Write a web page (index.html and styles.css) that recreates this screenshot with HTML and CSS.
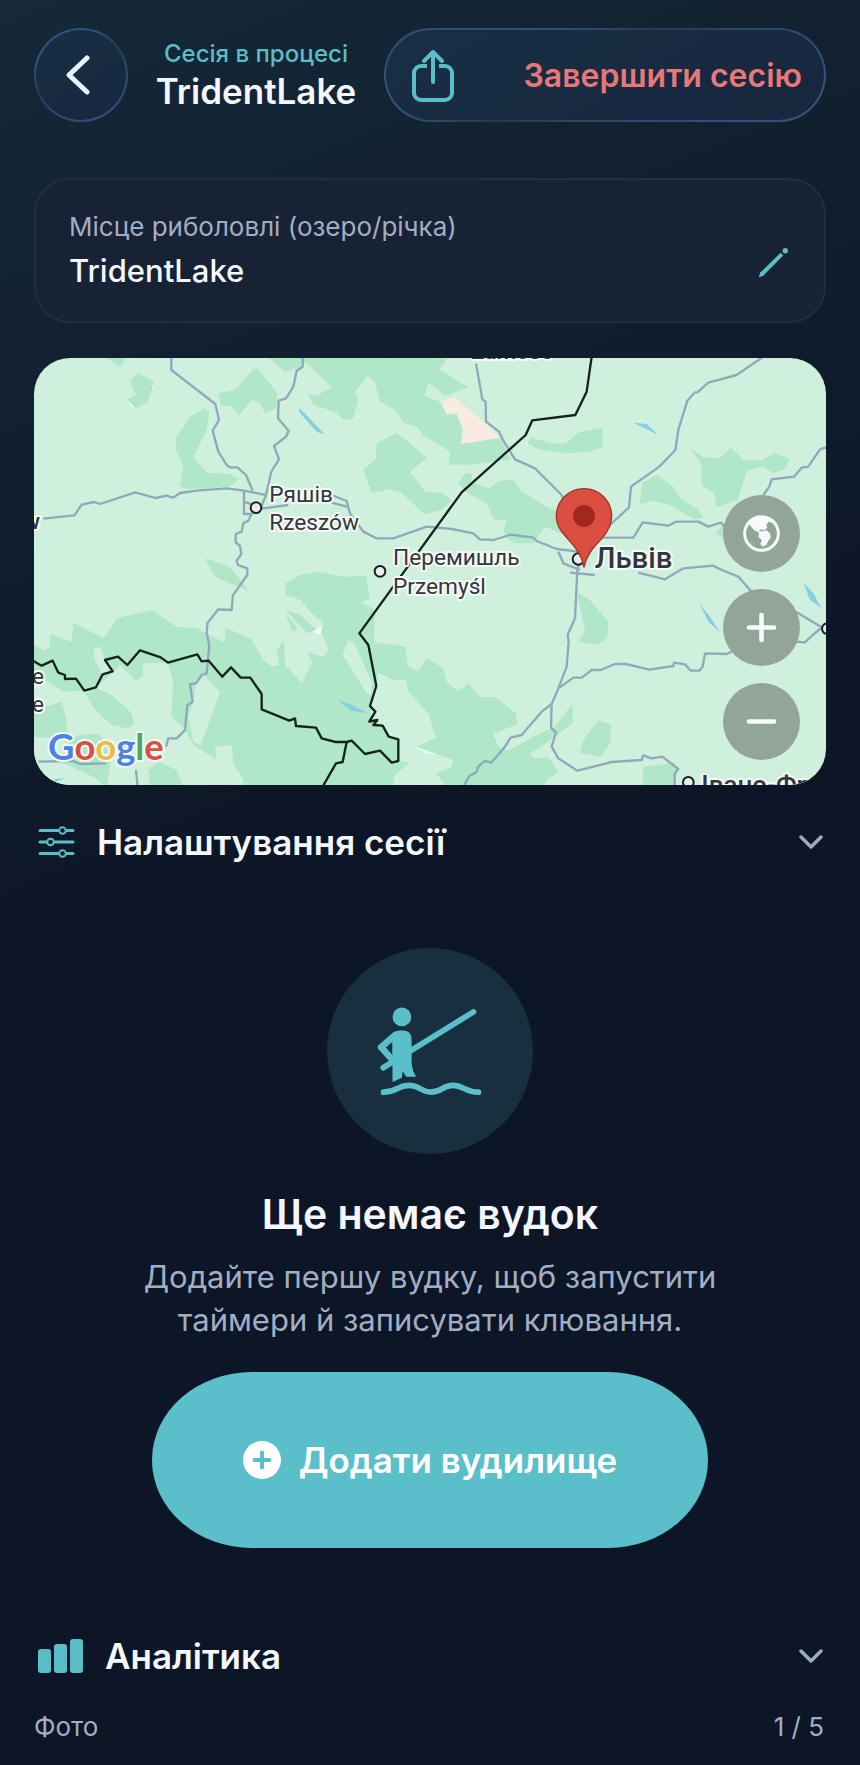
FILE: index.html
```html
<!DOCTYPE html>
<html lang="uk">
<head>
<meta charset="utf-8">
<meta name="viewport" content="width=device-width, initial-scale=1">
<title>TridentLake</title>
<link rel="stylesheet" href="styles.css">
</head>
<body>
<main class="screen">
  <header class="topbar">
    <button class="glass back" aria-label="Назад">
      <svg class="back-icon" viewBox="0 0 24 40" fill="none" stroke="currentColor" stroke-width="5" stroke-linecap="round" stroke-linejoin="round"><path d="M21 3 3 20l18 17"/></svg>
    </button>
    <div class="heading">
      <p class="status">Сесія в процесі</p>
      <h1 class="title">TridentLake</h1>
    </div>
    <div class="glass actions">
      <button class="share" aria-label="Поділитися">
        <svg class="share-icon" viewBox="0 0 42 54" fill="none" stroke="currentColor" stroke-width="4" stroke-linecap="round" stroke-linejoin="round"><path d="M21 34V4M12 13l9-9 9 9"/><path d="M15 18H9a7 7 0 0 0-7 7v20a7 7 0 0 0 7 7h24a7 7 0 0 0 7-7V25a7 7 0 0 0-7-7h-6" stroke-linecap="butt"/></svg>
      </button>
      <button class="finish">Завершити сесію</button>
    </div>
  </header>

  <section class="place">
    <div class="place-field">
      <label class="place-label" for="place">Місце риболовлі (озеро/річка)</label>
      <input class="place-input" id="place" type="text" value="TridentLake">
    </div>
    <button class="edit" aria-label="Редагувати">
      <svg class="edit-icon" viewBox="0 0 86 86" fill="currentColor"><path d="M1 85 5 72 64 14 72 22 14 81Z"/><path d="M1 85 5 72 14 81Z" stroke="currentColor" stroke-width="2" stroke-linejoin="round"/><circle cx="78" cy="8" r="8"/></svg>
    </button>
  </section>

  <section class="map" aria-label="Мапа">
    <svg class="map-art" viewBox="12 24 2376 1281" preserveAspectRatio="xMidYMid slice">
      <rect class="land" x="0" y="0" width="2430" height="1320"/>
      <g class="forest">
        <path d="M225 20 272 52 290 20ZM325 68 372 95 352 160 315 175 290 148 318 135 300 92ZM670 57 685 57 742 130 738 175 705 190 690 160 665 150 628 196 605 170 572 165 566 130 615 120ZM712 20 765 66 812 50 812 20Z"/>
        <path d="M480 200 525 175 538 190 530 240 490 322 530 368 600 372 628 388 600 410 470 418 450 408 460 345 438 300 438 262ZM525 625 600 650 640 700 658 725 600 700 555 680Z"/>
        <path d="M810 20 1255 20 1228 58 1315 112 1245 137 1195 97 1183 137 1230 155 1250 195 1280 188 1297 235 1292 283 1410 264 1442 328 1325 344 1255 344 1262 305 1180 255 1160 230 1120 218 1095 180 1050 155 1035 95 1013 78 975 125 985 150 968 208 940 208 915 185 850 165 832 130 860 137 905 112 830 40 810 40Z"/>
        <path d="M1100 248 1140 280 1190 325 1140 365 1185 425 1240 430 1265 450 1235 480 1185 493 1110 425 1080 418 1025 430 1000 360 1038 325 1040 280Z"/>
        <path d="M1285 400 1307 368 1328 372 1322 395 1375 415 1410 392 1450 390 1475 425 1550 470 1620 500 1620 560 1545 530 1510 580 1450 580 1420 545 1430 510 1390 508 1370 460 1320 435Z"/>
        <path d="M1492 280 1505 262 1560 280 1605 280 1650 245 1718 235 1718 292 1675 305 1610 310 1530 300Z"/>
        <path d="M1980 293 2020 322 2067 325 2102 293 2142 330 2195 330 2235 310 2280 328 2265 358 2230 370 2200 350 2150 362 2123 450 2060 472 2052 430 2015 405 2015 345ZM1835 400 1882 375 1930 410 1950 445 2005 480 2018 503 1990 507 1920 465 1870 452 1830 462ZM2055 550 2080 525 2090 570Z"/>
        <path d="M1640 725 1685 755 1735 815 1732 865 1700 885 1645 875 1665 840ZM1705 1110 1743 1123 1742 1175 1712 1222 1650 1208 1660 1170ZM1840 1250 1905 1243 1932 1235 1942 1260 1930 1310 1838 1310Z"/>
        <path d="M12 882 40 902 60 890 60 852 125 875 130 818 222 865 260 805 365 780 440 830 500 835 585 878 585 832 665 868 700 930 725 950 748 945 740 900 762 870 765 945 810 990 848 935 808 900 768 795 765 700 810 675 865 665 940 680 1008 678 1020 745 995 757 1035 780 1032 875 1125 890 1135 950 1165 963 1190 923 1240 955 1250 995 1285 1023 1315 1000 1350 1042 1395 1040 1458 1090 1462 1122 1390 1152 1405 1190 1435 1202 1510 1160 1575 1130 1628 1060 1628 1120 1550 1180 1500 1210 1510 1225 1555 1222 1585 1265 1550 1290 1540 1310 12 1310Z"/>
      </g>
      <g class="land">
        <path d="M12 970 100 1025 165 1022 200 1012 250 965 270 945 318 992 338 980 340 940 414 938 430 1000 425 1090 460 1130 490 1185 560 1230 555 1190 605 1185 610 1240 640 1290 640 1310 12 1310Z"/>
        <path d="M190 895 210 890 225 930 248 964 215 973 195 930ZM500 985 520 975 570 1025 512 1185 490 1175 475 1100 490 1055Z"/>
        <path d="M765 735 812 750 840 785 880 820 875 855 898 900 880 922 830 905 848 935 815 1000 790 970 768 930 765 850 805 840 768 790Z"/>
        <path d="M1045 968 1090 990 1128 990 1135 1025 1195 1090 1218 1163 1160 1190 1270 1230 1265 1252 1218 1270 1250 1310 1088 1310 1095 1275 1140 1238 1105 1233 1105 1168 1076 1160 1058 1127 1025 1100 1020 1060 1040 1010ZM955 872 970 875 1025 995 1022 1035 1010 1030 938 915Z"/>
      </g>
      <g class="forest">
        <path d="M12 1080 95 1055 110 1110 115 1160 60 1165 12 1160ZM165 1030 200 1015 245 1035 305 1090 312 1125 290 1135 245 1125 195 1080ZM430 995 480 1045 460 1135 425 1100ZM355 1260 385 1235 440 1260 460 1310 360 1310ZM120 1160 200 1150 250 1190 230 1310 190 1280 100 1240Z"/>
        <path d="M765 700 812 680 812 735ZM768 780 812 795 860 840 830 850Z"/>
      </g>
      <path class="sand" d="M1235 155 1272 138 1330 190 1365 220 1410 264 1292 281 1300 240 1280 190 1248 192Z"/>
      <path class="snow" d="m875 828-5 27-22-10ZM1160 1190l60 25-35-7ZM290 148l25 26-10-2Z"/>
      <path class="water" d="M808 173 885 254 860 245 808 187ZM1810 218 1850 222 1885 254ZM2008 760 2040 800 2070 847 2035 815ZM2320 698 2350 730 2375 775 2340 750ZM922 1050 965 1065 1012 1090 965 1082ZM75 1287 105 1285 70 1297Z"/>
      <g class="roads">
        <path d="M424 20V60L556 162 567 210 548 242 565 305 590 345 600 352 622 352 648 375 668 422M818 20V50L800 62 790 110 768 145 746 152 744 205 776 242 768 260 732 288 747 328 724 365 708 435M40 506 133 496 155 464 192 456 210 462 316 427 376 444 410 437 430 443 450 429 500 422 590 415 642 422 708 435M642 422V492L665 492 655 512 640 520 635 545 617 552 617 577 630 588 634 612 620 632 624 645 652 655 652 675 608 737 608 745 605 780 565 778 532 820 530 850 538 885 530 970 515 975 498 1000 480 1003 488 1055 472 1065 465 1140 440 1165 415 1165 408 1190M642 455 700 475 775 465M708 435 690 480"/>
        <path d="M25 1235 130 1233 150 1242 230 1240M318 1260 323 1310"/>
        <path d="M1338 40 1357 148 1367 155 1368 215 1407 245 1420 272 1455 328 1515 355 1595 435 1650 560M905 435 950 453 960 490 1000 545 1040 565 1090 565 1190 530 1265 537 1330 550 1350 568 1390 570 1442 554 1510 563 1520 573 1580 597 1645 605M905 458 950 470M1585 605 1600 640 1650 660"/>
        <path d="M2200 20 2120 75 2035 98 2002 127 1995 127 1972 152 1945 240 1936 300 1888 350 1803 410 1797 472 1740 525 1660 600M1700 563H1810L1838 517 1915 527 1938 515 2005 515 2035 530 2072 518 2085 530M2390 292 2370 298 2335 350 2315 353 2292 380 2225 388 2218 410 2200 435"/>
        <path d="M1620 668 1695 675M1825 668 1905 688 1960 655 2050 647 2075 660 2125 680 2165 725 2305 790 2375 832 2345 858 2325 877 2300 875M1650 630 1642 660 1635 805 1617 845 1613 855 1616 875 1610 950 1585 1015 1565 1062 1563 1133 1578 1147 1565 1190 1585 1225 1642 1262 1745 1236 1835 1230 1840 1216 1865 1225 1897 1220 1945 1257 1934 1272V1310M1565 1062 1535 1085 1475 1155 1442 1163 1425 1190 1385 1237 1363 1233 1345 1250 1340 1265 1318 1278 1300 1310M1585 1015 1630 983 1655 983 1685 960 1712 960 1755 942 1788 942 1858 959 1930 948 1932 938 1965 943 1982 962 2008 962 2018 950 2025 910 2090 912 2105 905"/>
      </g>
      <g class="borders">
        <path d="M1685 20 1670 125 1636 195 1507 211 1487 255 1295 427 988 850 1015 885 1039 1008 1020 1068 1036 1085 1018 1115 1042 1110 1030 1125 1058 1127 1076 1160 1105 1168V1233L1085 1238 1050 1202 1005 1212 965 1172 950 1176 917 1176 875 1165 858 1133 798 1128 795 1105 778 1112 695 1078V1032L661 983H632L603 952 577 980 536 932 515 934 502 913 414 938 392 922 330 901 292 945 264 920 225 930 248 964 218 973 198 1012 163 1022 138 986 105 987V975L85 968 68 932 35 947 8 932"/>
        <path d="M950 1176 938 1236 918 1240 878 1310"/>
      </g>
      <g class="towns"><circle cx="678" cy="473" r="16"/><circle cx="1050" cy="664" r="16"/><circle cx="1645" cy="627" r="17"/><circle cx="1975" cy="1297" r="16"/><circle cx="2392" cy="836" r="16"/></g>
      <g class="labels">
        <text x="718" y="457">Ряшів</text><text x="718" y="540">Rzeszów</text>
        <text x="1089" y="646">Перемишль</text><text x="1089" y="732">Przemyśl</text>
        <text x="42" y="1001" text-anchor="end">е</text><text x="42" y="1087" text-anchor="end">e</text>
        <text class="city" x="1322" y="28">Zamość</text><text class="city" x="30" y="538" text-anchor="end">w</text>
        <text class="major" x="1694" y="655">Львів</text><text class="region" x="2014" y="1332">Івано-Франківськ</text>
      </g>
      <g class="pin"><path d="M1662 652C1656 618 1640 596 1612 565Q1579 532 1579 499A83 83 0 0 1 1745 499Q1745 532 1716 565C1686 596 1669 618 1662 652Z"/><circle cx="1662" cy="498" r="33"/></g>
      <text class="google" x="54" y="1231"><tspan class="g-blue">G</tspan><tspan class="g-red">o</tspan><tspan class="g-yellow">o</tspan><tspan class="g-blue">g</tspan><tspan class="g-green">l</tspan><tspan class="g-red">e</tspan></text>
    </svg>
    <div class="map-controls">
      <button class="map-button" aria-label="Тип мапи">
        <svg class="map-icon" viewBox="0 0 112 112"><circle cx="56" cy="56" r="51" fill="none" stroke="currentColor" stroke-width="9"/><path fill="currentColor" d="M12 26 34 8 72 5 95 22 88 24 78 20 70 30 74 38 64 47 54 43 47 47 58 50 72 46 82 57 84 69 77 77 71 91 59 95 52 88 57 76 47 67 48 54 32 45 22 32Z"/></svg>
      </button>
      <button class="map-button" aria-label="Збільшити"><svg class="map-icon" viewBox="0 0 112 112" stroke="currentColor" stroke-width="14" stroke-linecap="round"><path d="M18 56H94M56 18V94"/></svg></button>
      <button class="map-button" aria-label="Зменшити"><svg class="map-icon" viewBox="0 0 112 112" stroke="currentColor" stroke-width="14" stroke-linecap="round"><path d="M18 56H94"/></svg></button>
    </div>
  </section>

  <button class="section-row" aria-expanded="false">
    <svg class="sliders-icon" viewBox="0 0 37 32" fill="none" stroke="currentColor" stroke-width="3" stroke-linecap="round"><path d="M2 4.500H20M29 4.500H35M2 16H8M17 16H35M2 27.500H20M29 27.500H35"/><circle cx="24.500" cy="4.500" r="3.300" stroke-width="2"/><circle cx="12.500" cy="16" r="3.300" stroke-width="2"/><circle cx="24.500" cy="27.500" r="3.300" stroke-width="2"/></svg>
    <span class="section-title">Налаштування сесії</span>
    <svg class="chevron" viewBox="0 0 24 14" fill="none" stroke="currentColor" stroke-width="3.500" stroke-linecap="round" stroke-linejoin="round"><path d="m2 2 10 10L22 2"/></svg>
  </button>

  <section class="empty">
    <div class="empty-badge">
      <svg class="angler" viewBox="22 26 616 616" fill="none" stroke="currentColor" stroke-width="17" stroke-linecap="round" stroke-linejoin="round">
        <path d="M190 384 460 217M191 457C233 457 232 437 267 437S301 457 333 457 367 437 399 437 434 457 475 457"/>
        <path d="M226 286 184 323 219 362" stroke-width="20"/>
        <path d="M217 300Q217 273 240 273H248Q275 273 275 300V372Q278 395 288 411L259 411 248 394 246 414 218 427Z" fill="currentColor" stroke="none"/>
        <circle cx="246" cy="232" r="28" fill="currentColor" stroke="none"/>
      </svg>
    </div>
    <h2 class="empty-title">Ще немає вудок</h2>
    <p class="empty-text">Додайте першу вудку, щоб запустити таймери й записувати клювання.</p>
    <button class="add">
      <svg class="add-icon" viewBox="0 0 38 38"><circle cx="19" cy="19" r="19" fill="currentColor"/><path class="add-plus" d="M19 11.500V26.500M11.500 19H26.500"/></svg>
      <span>Додати вудилище</span>
    </button>
  </section>

  <button class="section-row" aria-expanded="false">
    <svg class="bars-icon" viewBox="0 0 45 34" fill="currentColor"><rect x="0" y="10" width="13" height="24" rx="3"/><rect x="16" y="5" width="13" height="29" rx="3"/><rect x="32" y="0" width="13" height="34" rx="3"/></svg>
    <span class="section-title">Аналітика</span>
    <svg class="chevron" viewBox="0 0 24 14" fill="none" stroke="currentColor" stroke-width="3.500" stroke-linecap="round" stroke-linejoin="round"><path d="m2 2 10 10L22 2"/></svg>
  </button>

  <div class="photos"><span>Фото</span><span>1 / 5</span></div>
</main>
</body>
</html>
```
FILE: styles.css
```css
* { box-sizing: border-box; }

body {
  margin: 0;
  min-height: 100vh;
  background: linear-gradient(158deg, #152938 0%, #0d1626 46%, #0d1626 100%);
  color: #f4f7ff;
  font-family: Inter, "Liberation Sans", sans-serif;
}

button, input { font: inherit; color: inherit; }

button {
  display: flex;
  align-items: center;
  padding: 0;
  border: 0;
  background: none;
  cursor: pointer;
}

svg { display: block; flex: none; }

h1, h2, p { margin: 0; }

.screen { padding: 28px 34px 24px; }

.topbar { display: flex; align-items: center; }

.glass {
  border: 2px solid transparent;
  border-radius: 47px;
  background:
    linear-gradient(150deg, #182f44, #17273e) padding-box,
    linear-gradient(150deg, #2d4d74 0%, #31557f 25%, #233b58 45%, #2a4868 60%, #365684 100%) border-box;
}

.back {
  justify-content: center;
  width: 94px;
  height: 94px;
  padding-right: 6px;
  color: #e6f6ff;
}

.back-icon { width: 24px; height: 40px; }

.heading { flex: 1; text-align: center; white-space: nowrap; }

.status {
  color: #5bbdc8;
  font-size: 24px;
  font-weight: 500;
  line-height: 32px;
}

.title { font-size: 35px; font-weight: 600; line-height: 42px; }

.actions {
  display: flex;
  align-items: center;
  justify-content: space-between;
  flex: 0 1 442px;
  height: 94px;
  padding: 0 22px 0 26px;
}

.share { color: #5bbdc8; }

.share-icon { width: 42px; height: 54px; }

.finish { color: #e7787a; font-size: 32px; font-weight: 600; white-space: nowrap; }

.place {
  display: flex;
  align-items: center;
  justify-content: space-between;
  margin-top: 56px;
  padding: 27px 36px 28px 33px;
  border: 2px solid #232d3e;
  border-radius: 36px;
  background: #182235;
}

.place-field { display: flex; flex: 1; flex-direction: column; }

.place-label { color: #a3aec4; font-size: 26px; line-height: 40px; }

.place-input {
  width: 100%;
  height: 46px;
  padding: 0;
  border: 0;
  outline: 0;
  background: none;
  font-size: 31px;
  font-weight: 500;
}

.edit { align-self: flex-end; padding-bottom: 16px; color: #5bbdc8; }

.edit-icon { width: 29px; height: 29px; }

.map {
  position: relative;
  overflow: hidden;
  margin-top: 35px;
  border-radius: 36px;
  aspect-ratio: 792 / 427;
}

.map-art { width: 100%; height: 100%; }

.land { fill: #d0f0de; }
.forest { fill: #b0e7c8; }
.sand { fill: #f7ebe2; }
.snow { fill: #f6fbf7; }
.water { fill: #86cfe3; }
.roads { fill: none; stroke: #8fa9ba; stroke-width: 7; stroke-linejoin: round; }
.borders { fill: none; stroke: #14231d; stroke-width: 7; stroke-linejoin: round; }
.towns { fill: #e9ecee; stroke: #1d2021; stroke-width: 6; }

.labels {
  fill: #33373c;
  stroke: #f5fbf8;
  stroke-width: 12;
  stroke-linejoin: round;
  paint-order: stroke;
  font-family: Roboto, sans-serif;
  font-size: 68px;
}

.city { font-weight: 500; }
.major { font-size: 88px; font-weight: 500; }
.region { font-size: 78px; font-weight: 500; }

.pin path { fill: #da4f40; stroke: #a52f26; stroke-width: 4; }
.pin circle { fill: #a0281f; }

.google {
  font-family: Lato, sans-serif;
  font-size: 109px;
  font-weight: 700;
  stroke: #f2faf6;
  stroke-width: 12;
  stroke-linejoin: round;
  paint-order: stroke;
}

.g-blue { fill: #4f80e6; }
.g-red { fill: #d84f43; }
.g-yellow { fill: #e8bd46; }
.g-green { fill: #4fa35c; }

.map-controls {
  position: absolute;
  right: 26px;
  bottom: 25px;
  display: grid;
  gap: 17px;
}

.map-button {
  justify-content: center;
  width: 77px;
  height: 77px;
  border-radius: 50%;
  background: #93a499;
  color: #f6fafb;
}

.map-icon { width: 37px; height: 37px; }

.section-row {
  width: 100%;
  height: 114px;
  padding: 0 3px 0 4px;
  gap: 22px;
  text-align: left;
}

.sliders-icon { width: 37px; height: 32px; color: #5bbdc8; }
.bars-icon { width: 45px; height: 34px; color: #5bbdc8; }
.section-title { flex: 1; font-size: 35px; font-weight: 600; }
.chevron { width: 24px; height: 14px; color: #9faabf; }

.empty {
  display: flex;
  flex-direction: column;
  align-items: center;
  padding: 49px 0 51px;
  text-align: center;
}

.empty-badge {
  width: 206px;
  height: 206px;
  border-radius: 50%;
  background: #172f3e;
  color: #5bbfca;
}

.angler { width: 100%; height: 100%; }

.empty-title { margin-top: 36px; font-size: 41px; font-weight: 600; line-height: 48px; }

.empty-text {
  max-width: 640px;
  margin-top: 17px;
  color: #a3aec4;
  font-size: 31px;
  line-height: 43px;
}

.add {
  justify-content: center;
  gap: 18px;
  margin-top: 31px;
  padding: 0 91px;
  height: 176px;
  border-radius: 100px / 88px;
  background: #5bbfca;
  color: #fff;
  font-size: 35px;
  font-weight: 600;
}

.add-icon { width: 38px; height: 38px; }
.add-plus { stroke: #5bbfca; stroke-width: 4; stroke-linecap: round; }

.photos {
  display: flex;
  justify-content: space-between;
  padding-right: 2px;
  color: #a3aec4;
  font-size: 26px;
  line-height: 28px;
}
```
